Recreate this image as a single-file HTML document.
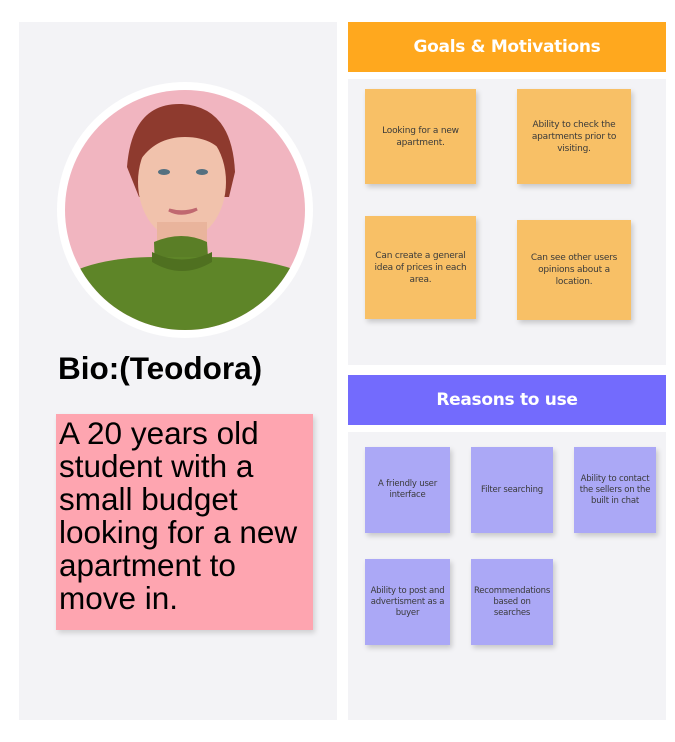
<!DOCTYPE html>
<html><head><style>
body{margin:0;width:675px;height:742px;background:#fff;position:relative;overflow:hidden;font-family:"Liberation Sans",sans-serif}
.a{position:absolute}
.s{position:absolute;display:flex;align-items:center;justify-content:center;text-align:center;font-size:9px;line-height:12px;color:#3a3a3a;box-shadow:2px 3px 5px rgba(0,0,0,.18);box-sizing:border-box;padding:0 4px;font-family:"DejaVu Sans","Liberation Sans",sans-serif;letter-spacing:-0.2px}
.o{background:#f8c066}
.p{background:#aba8f6;font-size:8.5px;line-height:11px}
.h{position:absolute;left:348px;width:318px;height:50px;color:#fff;font-weight:bold;font-size:17px;display:flex;align-items:center;justify-content:center;font-family:"DejaVu Sans",sans-serif;letter-spacing:-0.3px}
</style></head><body>
<div class="a" style="left:19px;top:22px;width:318px;height:698px;background:#f3f3f6"></div>
<svg class="a" style="left:57px;top:82px" width="256" height="256" viewBox="0 0 256 256">
<defs><clipPath id="c"><circle cx="128" cy="128" r="120"/></clipPath></defs>
<circle cx="128" cy="128" r="128" fill="#fff"/>
<g clip-path="url(#c)">
<rect width="256" height="256" fill="#f1b5c0"/>
<path d="M70 85 Q75 20 125 22 Q175 25 178 90 L172 115 L82 115Z" fill="#8e3a2e"/>
<ellipse cx="125" cy="100" rx="44" ry="58" fill="#f1c2ac"/>
<path d="M82 80 Q90 38 128 38 Q165 40 172 80 Q160 55 128 55 Q98 55 82 80Z" fill="#8e3a2e"/>
<ellipse cx="107" cy="90" rx="6" ry="3" fill="#557080"/>
<ellipse cx="145" cy="90" rx="6" ry="3" fill="#557080"/>
<path d="M112 128 Q125 135 140 127 Q126 132 112 128Z" fill="#c06870" stroke="#c06870" stroke-width="3"/>
<rect x="100" y="140" width="50" height="25" fill="#e9b49c"/>
<path d="M97 160 Q125 148 150 160 L152 190 L98 190Z" fill="#5a7e26"/>
<path d="M0 256 L5 195 Q40 175 98 175 L150 175 Q205 175 245 190 L256 256Z" fill="#5e8528"/>
<path d="M95 180 Q125 198 155 180 L155 170 Q125 185 95 170Z" fill="#4f7020"/>
</g>
</svg>
<div class="a" style="left:58px;top:350px;font-size:31.5px;font-weight:bold;color:#000">Bio:(Teodora)</div>
<div class="a" style="left:56px;top:414px;width:257px;height:216px;background:#fea5b0;box-shadow:2px 3px 5px rgba(0,0,0,.15);box-sizing:border-box;padding:3px 3px;font-size:31.5px;line-height:33px;color:#000;white-space:nowrap">A 20 years old<br>student with a<br>small budget<br>looking for a new<br>apartment to<br>move in.</div>

<div class="h" style="top:22px;background:#ffa81e">Goals &amp; Motivations</div>
<div class="a" style="left:348px;top:79px;width:318px;height:286px;background:#f3f3f6"></div>
<div class="s o" style="left:365px;top:89px;width:111px;height:95px">Looking for a new apartment.</div>
<div class="s o" style="left:517px;top:89px;width:114px;height:95px">Ability to check the apartments prior to visiting.</div>
<div class="s o" style="left:365px;top:216px;width:111px;height:103px">Can create a general idea of prices in each area.</div>
<div class="s o" style="left:517px;top:220px;width:114px;height:100px">Can see other users opinions about a location.</div>

<div class="h" style="top:375px;background:#736bfd">Reasons to use</div>
<div class="a" style="left:348px;top:432px;width:318px;height:288px;background:#f3f3f6"></div>
<div class="s p" style="left:365px;top:447px;width:85px;height:86px">A friendly user interface</div>
<div class="s p" style="left:471px;top:447px;width:82px;height:86px">Filter searching</div>
<div class="s p" style="left:574px;top:447px;width:82px;height:86px">Ability to contact the sellers on the built in chat</div>
<div class="s p" style="left:365px;top:559px;width:85px;height:86px">Ability to post and advertisment as a buyer</div>
<div class="s p" style="left:471px;top:559px;width:82px;height:86px">Recommendations based on searches</div>
</body></html>
